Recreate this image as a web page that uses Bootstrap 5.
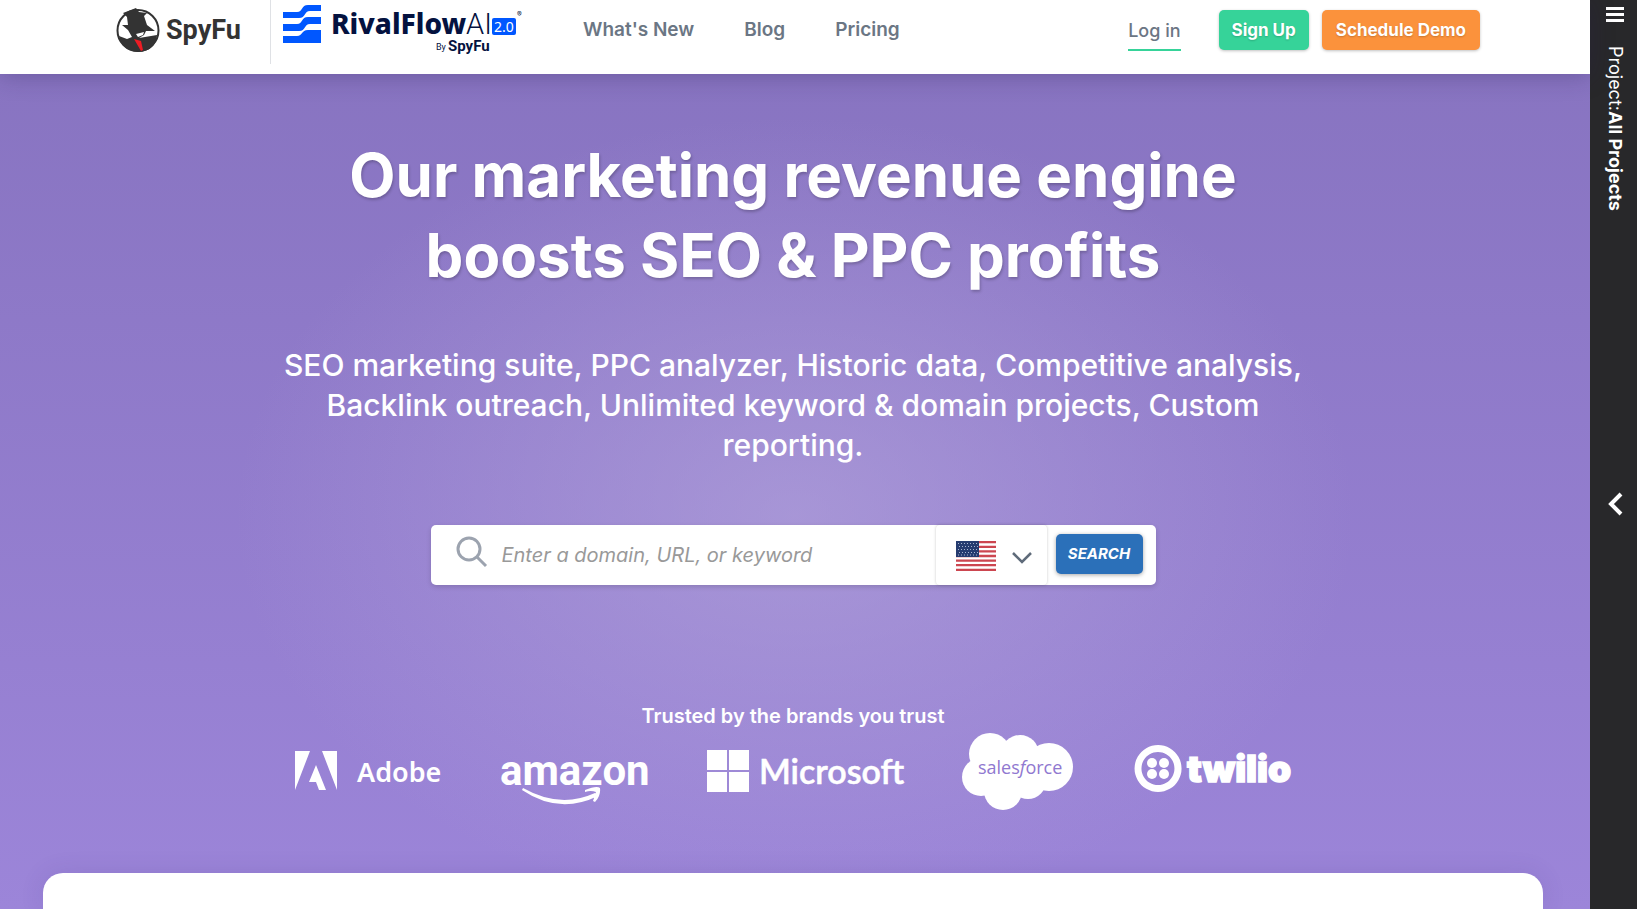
<!DOCTYPE html>
<html lang="en">
<head>
<meta charset="utf-8">
<meta name="viewport" content="width=device-width, initial-scale=1">
<title>SpyFu</title>
<link href="https://cdn.jsdelivr.net/npm/bootstrap@5.3.0/dist/css/bootstrap.min.css" rel="stylesheet">
<style>
body{font-family:Inter,"Liberation Sans",sans-serif;overflow:hidden}
.page-shell{min-height:100vh}
.site-header{height:74px;background:#fff;box-shadow:0 2px 24px rgba(40,30,80,.3);z-index:2;padding:0 110px 0 116px}
.brand-spyfu{height:64px;width:155px;border-right:1px solid #dfe1e5}
.brand-rival{height:60px;width:246px;margin-left:8px}
.top-nav{margin-left:58px;gap:50px;padding-top:18px}
.top-nav a,.login-link{color:#6b7684;font-size:19px;line-height:24px;font-weight:600;text-decoration:none}
.login-link{font-size:18px;font-weight:500;padding-bottom:6px;border-bottom:2px solid #36d399;margin:9px 38px 0 0}
.header-actions{padding-top:10px}
.cta{height:40px;border-radius:5px;border:0;color:#fff;font-size:17px;font-weight:700;line-height:24px;padding:0 14px;text-shadow:0 1px 2px rgba(0,0,0,.2);box-shadow:0 1px 3px rgba(0,0,0,.25)}
.cta-green{background:#36d399;padding:0 13px}
.cta-orange{background:#fb923c;margin-left:13px}
.hero{color:#fff;padding-right:4px;background:radial-gradient(ellipse 560px 400px at 50% 53%,rgba(180,165,220,.62),rgba(160,145,215,0)),linear-gradient(#8874c1,#9c85d9)}
.hero h1{font-size:60px;line-height:80px;font-weight:700;margin:0 auto;padding-top:61px;max-width:1020px;text-shadow:1px 2px 3px rgba(0,0,0,.22)}
.hero .subtitle{font-size:30px;line-height:40px;font-weight:500;max-width:1020px;margin:50px auto 0}
.search-bar{width:725px;max-width:100%;height:60px;margin:60px auto 0;background:#fff;border-radius:5px;box-shadow:0 2px 5px rgba(0,0,0,.15)}
.search-bar input{border:0;outline:0;background:none;font-size:20px;font-style:italic;color:#444;min-width:0;margin-left:11px}
.search-bar input::placeholder{color:#999;opacity:1}
.country-btn{width:111px;height:60px;background:#fff;border:0;border-radius:4px;box-shadow:0 0 3px rgba(0,0,0,.22);padding:2px 14px 0 20px}
.search-btn{width:87px;height:40px;margin:0 13px 2px 9px;background:#2b70b9;color:#fff;border:0;border-radius:5px;font-size:15px;font-weight:700;font-style:italic;box-shadow:0 1px 4px rgba(0,0,0,.35)}
.trusted{font-size:20px;line-height:28px;font-weight:600;margin:117px 0 0}
.brands{width:1000px;max-width:100%;margin:0 auto}
.panel{min-height:36px;margin:59px 43px 0 43px;background:#fff;border-radius:20px 20px 0 0;box-shadow:0 0 24px rgba(60,40,120,.12)}
.project-bar{width:47px;background:#28282a;color:#fff;padding-left:2px}
.project-bar .label-v{writing-mode:vertical-rl;font-size:18px;line-height:24px;margin:14px 0 280px}
.project-bar button{background:none;border:0;color:#fff;padding:0}
.project-bar .menu-btn{padding-top:4px}
</style>
</head>
<body>
<div class="page-shell d-flex">
  <div class="flex-grow-1 d-flex flex-column">
    <header class="site-header d-flex align-items-start position-relative">
      <a href="#" class="brand-spyfu" aria-label="SpyFu home">
        <svg width="150" height="60" viewBox="0 0 150 60">
          <circle cx="22" cy="30.500" r="20.500" fill="#fff" stroke="#333" stroke-width="2"/>
          <path d="M7 13L20 8L23 12L31 13L28 16L31 25L39 31L30 31L28 35L23 38L41 35Q40 51 22 52Q5 50 3 36L11 39L16 37L12 30L6 25L12 25L11 17Z" fill="#333"/>
          <path d="M18 39L25 41L27 50L25 51Z" fill="#ed1c24"/><path d="M20 34L28 32L27 35L22 37Z" fill="#fff"/>
          <text x="50" y="39" font-family="Roboto, sans-serif" font-size="27" font-weight="700" fill="#333">SpyFu</text>
        </svg>
      </a>
      <a href="#" class="brand-rival" aria-label="RivalFlow AI">
        <svg width="246" height="60" viewBox="0 0 246 60">
          <g fill="#0057ff"><path d="M4 12H18C24 12 22 5 29 5H42V11H31C25 11 27 18 20 18H4Z"/><path d="M4 24H18C24 24 22 17 29 17H42V24H31C25 24 27 31 20 31H4Z"/><path d="M4 36H18C24 36 22 30 29 30H42V43H4Z"/></g>
          <g fill="#04123f"><text x="52" y="34" font-family="Noto Sans, sans-serif" font-size="28" font-weight="800">RivalFlow</text><text x="187" y="34" font-family="Roboto, sans-serif" font-size="29" font-weight="300">AI</text>
          <text x="157" y="50" font-family="Roboto, sans-serif" font-size="9">By</text><text x="169" y="51" font-family="Roboto, sans-serif" font-weight="700" font-size="15">SpyFu</text><text x="238" y="17" font-size="7">®</text></g>
          <rect x="213" y="18" width="24" height="17" rx="2" fill="#0057ff"/><text x="215" y="32" font-family="Noto Sans, sans-serif" font-size="14" fill="#fff">2.0</text>
        </svg>
      </a>
      <nav class="top-nav d-flex"><a href="#">What's New</a><a href="#">Blog</a><a href="#">Pricing</a></nav>
      <div class="header-actions ms-auto d-flex align-items-start">
        <a href="#" class="login-link">Log in</a><button class="cta cta-green">Sign Up</button><button class="cta cta-orange">Schedule Demo</button>
      </div>
    </header>
    <main class="hero flex-grow-1 text-center d-flex flex-column">
      <h1>Our marketing revenue engine boosts SEO &amp; PPC profits</h1>
      <p class="subtitle">SEO marketing suite, PPC analyzer, Historic data, Competitive analysis, Backlink outreach, Unlimited keyword &amp; domain projects, Custom reporting.</p>
      <form class="search-bar d-flex align-items-center">
        <svg class="ms-4 mb-1" width="34" height="34" viewBox="0 0 34 34" fill="none" stroke="#9ca3af" stroke-width="3"><circle cx="14" cy="13" r="11"/><path d="M22 21L31 30"/></svg>
        <input class="flex-grow-1" type="text" aria-label="Search" placeholder="Enter a domain, URL, or keyword">
        <button type="button" class="country-btn d-flex align-items-center justify-content-between" aria-label="Country: United States">
          <svg width="40" height="30" viewBox="0 0 40 30"><path fill="#fff" d="M0 0H40V30H0Z"/><path stroke="#cc4650" stroke-width="2.300" d="M0 1.200H40M0 5.800H40M0 10.400H40M0 15H40M0 19.600H40M0 24.200H40M0 28.800H40"/><path fill="#263c70" d="M0 0H23V16H0Z"/><path stroke="#a9b4cf" stroke-width="1" stroke-dasharray="1 2" d="M2 2.500H22M3 5.500H22M2 8.500H22M3 11.500H22M2 14H22"/></svg>
          <svg class="mt-1" width="22" height="14" viewBox="0 0 22 14" fill="none" stroke="#5f6b7a" stroke-width="2.500"><path d="M2 2L11 11L20 2"/></svg>
        </button>
        <button class="search-btn">SEARCH</button>
      </form>
      <p class="trusted">Trusted by the brands you trust</p>
      <svg class="brands" viewBox="-2 0 1000 84" height="84" fill="#fff">
        <path d="M0 21H15L0 60ZM27 21H42V60ZM21 35L31 60H24L21 52H14Z"/>
        <text x="62" y="52" font-family="Noto Sans, sans-serif" font-size="27" font-weight="600">Adobe</text>
        <text x="205" y="55" font-family="Roboto, sans-serif" font-size="42" font-weight="700">amazon</text>
        <path d="M228 58Q265 79 300 63L303 66Q264 85 227 60ZM290 60Q302 55 305 58Q306 66 300 72L298 71L301 62Q296 60 290 62Z"/>
        <path d="M412 20H432V40H412ZM434 20H454V40H434ZM412 42H432V62H412ZM434 42H454V62H434Z"/>
        <text x="464" y="54" font-family="Lato, sans-serif" font-size="34" font-weight="600" stroke="#fff" stroke-width="0.500">Microsoft</text>
        <circle cx="695" cy="24" r="21"/><circle cx="725" cy="24" r="19"/><circle cx="754" cy="37" r="24"/><circle cx="686" cy="47" r="19"/><circle cx="708" cy="61" r="19"/><circle cx="733" cy="51" r="18"/><path d="M690 25H745V55H690Z"/>
        <text x="683" y="44" font-family="Open Sans, sans-serif" font-size="18" font-weight="500" fill="#9078d0">sales<tspan font-style="italic">f</tspan>orce</text>
        <path fill-rule="evenodd" d="M863 15A23.500 23.500 0 1 0 863.100 15ZM863 22A16.500 16.500 0 1 1 862.900 22Z"/><circle cx="857" cy="33" r="5"/><circle cx="869" cy="33" r="5"/><circle cx="857" cy="44" r="5"/><circle cx="869" cy="44" r="5"/>
        <text x="892" y="52" font-family="Inter, sans-serif" font-size="37" font-weight="900" stroke="#fff" stroke-width="1.500">twilio</text>
      </svg>
      <div class="panel flex-grow-1"></div>
    </main>
  </div>
  <aside class="project-bar d-flex flex-column align-items-center flex-shrink-0">
    <button class="menu-btn" aria-label="Menu"><svg class="d-block" width="18" height="18" viewBox="0 0 18 18" fill="#fff"><path d="M0 3H18V6H0ZM0 9H18V12H0ZM0 15H18V18H0Z"/></svg></button>
    <div class="label-v mt-4">Project:<strong>All Projects</strong></div>
    <button aria-label="Expand"><svg width="16" height="24" viewBox="0 0 16 24" fill="none" stroke="#fff" stroke-width="4"><path d="M14 2L4 12L14 22"/></svg></button>
  </aside>
</div>
<script src="https://cdn.jsdelivr.net/npm/bootstrap@5.3.0/dist/js/bootstrap.bundle.min.js"></script>
</body>
</html>
